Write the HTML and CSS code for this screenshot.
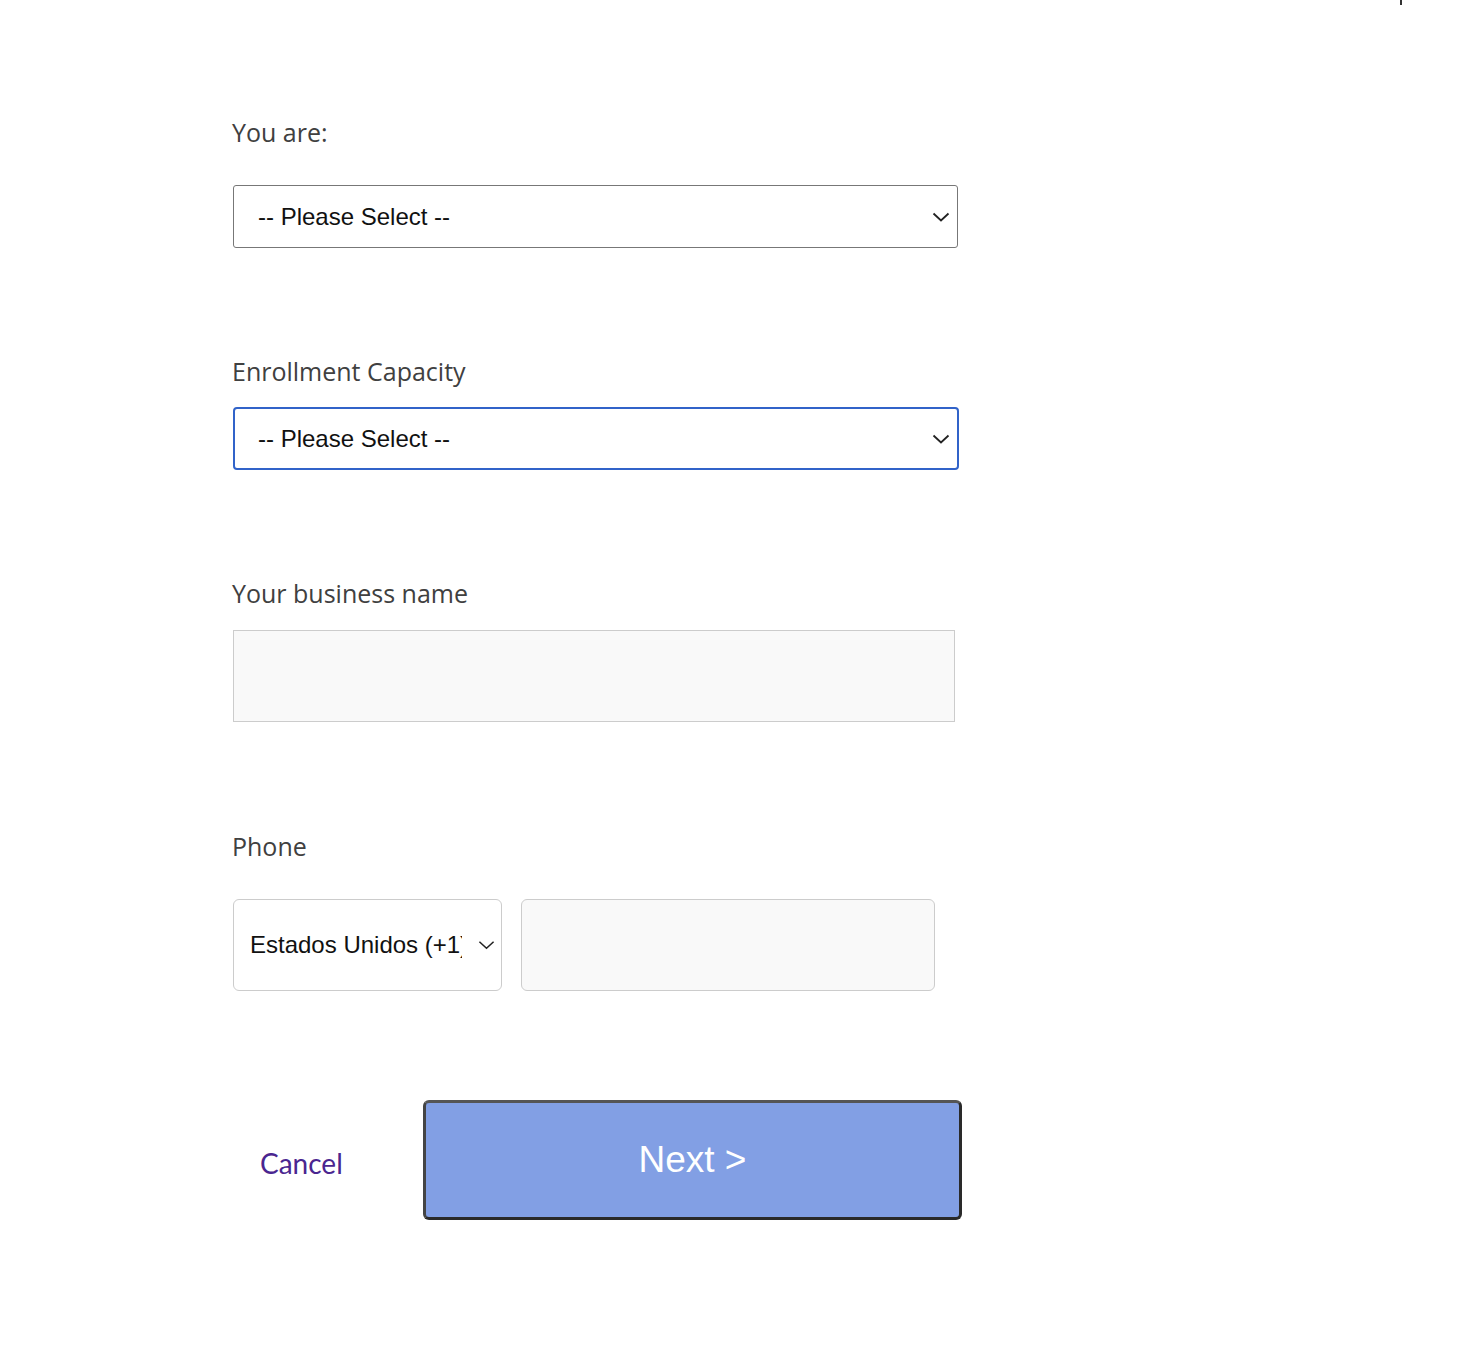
FILE: index.html
```html
<!DOCTYPE html>
<html>
<head>
<meta charset="utf-8">
<link rel="stylesheet" href="styles.css">
</head>
<body>
<div class="corner-mark"></div>
<form class="form">
  <div class="field field-you">
    <label class="label">You are:</label>
    <div class="select">
      <span class="select-text">-- Please Select --</span>
      <svg class="chev" width="18" height="10" viewBox="0 0 18 10"><path d="M1.5 1.5 L9 8.5 L16.5 1.5" fill="none" stroke="#222" stroke-width="1.8"/></svg>
    </div>
  </div>
  <div class="field field-enroll">
    <label class="label">Enrollment Capacity</label>
    <div class="select select-focus">
      <span class="select-text">-- Please Select --</span>
      <svg class="chev" width="18" height="10" viewBox="0 0 18 10"><path d="M1.5 1.5 L9 8.5 L16.5 1.5" fill="none" stroke="#222" stroke-width="1.8"/></svg>
    </div>
  </div>
  <div class="field field-business">
    <label class="label">Your business name</label>
    <div class="input"></div>
  </div>
  <div class="field field-phone">
    <label class="label">Phone</label>
    <div class="phone-row">
      <div class="country">
        <span class="country-text">Estados Unidos (+1)</span>
        <svg class="chev-small" width="18" height="10" viewBox="0 0 18 10"><path d="M1.5 1.5 L9 8.5 L16.5 1.5" fill="none" stroke="#222" stroke-width="1.6"/></svg>
      </div>
      <div class="phone-input"></div>
    </div>
  </div>
  <div class="actions">
    <a class="cancel">Cancel</a>
    <button type="button" class="next">Next &gt;</button>
  </div>
</form>
</body>
</html>
```
FILE: styles.css
```css
html, body {
  margin: 0;
  padding: 0;
  background: #fff;
}
body {
  font-family: "Open Sans", "Liberation Sans", sans-serif;
}
.corner-mark {
  position: absolute;
  left: 1400px;
  top: 0;
  width: 2px;
  height: 5px;
  background: #333;
}
.form {
  padding-left: 233px;
  padding-top: 114px;
  display: flex;
  flex-direction: column;
}
.field {
  display: flex;
  flex-direction: column;
}
.label {
  font-family: "Open Sans", "Lato", sans-serif;
  font-size: 25px;
  color: #404040;
  line-height: 36px;
  height: 36px;
  margin-left: -1px;
}
.field-you .label { margin-bottom: 35px; }
.field-enroll { margin-top: 105px; }
.field-enroll .label { margin-bottom: 18px; }
.field-business { margin-top: 105px; }
.field-business .label { margin-bottom: 19px; }
.field-phone { margin-top: 106px; }
.field-phone .label { margin-bottom: 35px; }

.select {
  box-sizing: border-box;
  width: 725px;
  height: 63px;
  border: 1px solid #777;
  border-radius: 3px;
  display: flex;
  align-items: center;
  justify-content: space-between;
  padding: 0 7px 0 24px;
  background: #fff;
}
.select-focus {
  border: 2px solid #3163c9;
  border-radius: 4px;
  padding: 0 7px 0 23px;
  width: 726px;
}
.select-text {
  font-family: "Liberation Sans", Arial, sans-serif;
  font-size: 24px;
  color: #111;
}
.chev { display: block; }
.input {
  box-sizing: border-box;
  width: 722px;
  height: 92px;
  background: #f9f9f9;
  border: 1px solid #ccc;
}
.phone-row {
  display: flex;
  gap: 19px;
}
.country {
  box-sizing: border-box;
  width: 269px;
  height: 92px;
  border: 1px solid #ccc;
  border-radius: 6px;
  background: #fff;
  display: flex;
  align-items: center;
  padding: 0 6px 0 16px;
}
.country-text {
  font-family: "Liberation Sans", Arial, sans-serif;
  font-size: 24px;
  color: #111;
  white-space: nowrap;
  overflow: hidden;
  width: 212px;
  flex: none;
}
.chev-small {
  display: block;
  margin-left: 16px;
}
.phone-input {
  box-sizing: border-box;
  width: 414px;
  height: 92px;
  border: 1px solid #ccc;
  border-radius: 6px;
  background: #f9f9f9;
}
.actions {
  margin-top: 109px;
  display: flex;
  align-items: center;
}
.cancel {
  font-family: "Lato", "Open Sans", sans-serif;
  font-size: 28px;
  color: #4a2690;
  margin-left: 27px;
  width: 163px;
  padding-top: 6px;
}
.next {
  box-sizing: border-box;
  width: 539px;
  height: 120px;
  background: #829fe4;
  border: 3px solid #2a2a2a;
  border-top-color: #555;
  border-left-color: #444;
  border-radius: 6px;
  color: #fff;
  font-family: "Liberation Sans", Arial, sans-serif;
  font-size: 37px;
  padding: 0;
  padding-bottom: 1px;
  margin: 0;
}
```
